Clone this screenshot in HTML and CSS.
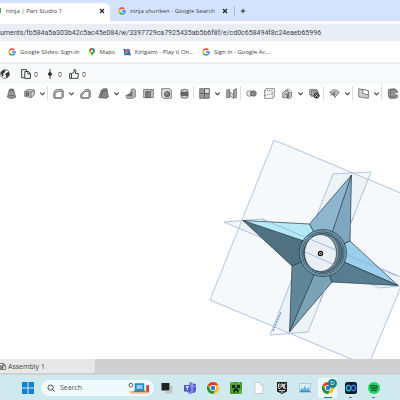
FILE: index.html
```html
<!DOCTYPE html>
<html lang="en">

<head>
  <meta charset="UTF-8">
  <meta name="viewport" content="width=device-width, initial-scale=1.0">
  <title>ninja | Part Studio 1</title>
  <link rel="stylesheet" href="styles.css">
</head>

<body>
  <!-- shared icons -->
  <svg class="defs" width="0" height="0">
    <symbol id="google" viewBox="0 0 16 16">
      <g fill="none" stroke-width="3">
        <path stroke="#ea4335" d="M3 5.200A6 6 0 0 1 12.500 4" />
        <path stroke="#fbbc05" d="M3 5.200A6 6 0 0 0 3 10.800" />
        <path stroke="#34a853" d="M3 10.800A6 6 0 0 0 11.800 12.600" />
        <path stroke="#4285f4" d="M11.800 12.600A6 6 0 0 0 14 8H8" />
      </g>
    </symbol>
    <symbol id="chrome" viewBox="0 0 24 24">
      <circle cx="12" cy="12" r="12" fill="#fbc116" />
      <path fill="#e33b2e" d="M12 12L1.600 6A12 12 0 0 1 22.400 6H12z" />
      <path fill="#229342" d="M1.600 6A12 12 0 0 0 12 24L17.200 15 12 12 6.800 15z" />
      <circle cx="12" cy="12" r="6" fill="#fff" />
      <circle cx="12" cy="12" r="4.500" fill="#2a75e8" />
    </symbol>
    <symbol id="chevron" viewBox="0 0 8 8">
      <path d="M1.500 3L4 5.500 6.500 3" fill="none" stroke="#333" stroke-width="1.300" />
    </symbol>
  </svg>

  <div class="screen">
    <div class="tabs">
      <div class="tab active">
        <i class="favicon"></i>
        <span class="title">ninja | Part Studio 1</span>
        <button class="close" aria-label="Close tab"><svg viewBox="0 0 8 8"><path d="M2 2l4 4M6 2L2 6" /></svg></button>
      </div>
      <div class="tab">
        <svg class="site"><use href="#google" /></svg>
        <span class="title">ninja shuriken - Google Search</span>
        <button class="close" aria-label="Close tab"><svg viewBox="0 0 8 8"><path d="M2 2l4 4M6 2L2 6" /></svg></button>
      </div>
      <button class="new-tab" aria-label="New tab"><svg viewBox="0 0 8 8"><path d="M4 1v6M1 4h6" /></svg></button>
    </div>

    <div class="address">
      <input type="text" aria-label="Address" value="uments/fb584a5a303b42c5ac45e084/w/3397729ca7925435ab5b6f8f/e/cd0c658494f8c24eaeb65996">
    </div>

    <nav class="bookmarks">
      <a href="#"><svg><use href="#google" /></svg>Google Slides: Sign-in</a>
      <a href="#"><svg viewBox="0 0 16 16">
          <path fill="#34a853" d="M8 16C7 11 2 10 2 6a6 6 0 0 1 12 0c0 4-5 5-6 10z" />
          <path fill="#4285f4" d="M8 0a6 6 0 0 1 5.500 3.500L8 9z" />
          <path fill="#ea4335" d="M3 2.500A6 6 0 0 1 8 0v6z" />
          <path fill="#fbbc05" d="M2.500 8L8 3l2 4-5 5z" />
          <circle cx="8" cy="6" r="2" fill="#fff" />
        </svg>Maps</a>
      <a href="#"><svg viewBox="0 0 16 16">
          <path fill="#2b6cb0" d="M1 1l6 2 6-1 1 6 2 7-8-1-5 1-1-6z" />
          <circle cx="8" cy="7" r="4" fill="#e2553d" />
          <path fill="#4db6e2" d="M5 5l6 5-7 1z" />
        </svg>Kirigami - Play it On...</a>
      <a href="#"><svg><use href="#google" /></svg>Sign in - Google Ac...</a>
    </nav>

    <div class="docbar">
      <svg class="globe" viewBox="0 0 16 16">
        <circle cx="8" cy="8" r="7" fill="#fff" stroke="#333" />
        <path fill="#333" d="M1 6l4-4 4 0-1 3-3 2 1 3-2 2zM9 7l5-3 1 5-4 5-2-1 1-3-2-1z" />
      </svg>
      <span class="count"><svg viewBox="0 0 16 16" class="line">
          <path d="M9 4V1H1v13h5M6 4h6l3 3v8H6z M11 4v4h4" />
        </svg>0</span>
      <span class="count"><svg viewBox="0 0 16 16" class="line">
          <path d="M8 0v16" /><circle cx="8" cy="8" r="2.500" fill="#333" />
        </svg>0</span>
      <span class="count"><svg viewBox="0 0 16 16" class="line">
          <path d="M1 7h3v8H1zM4 8l4-3V1h2l1 2-1 4h5l-1 8H6l-2-1" />
        </svg>0</span>
    </div>

    <div class="tools">
      <button aria-label="Loft"><svg viewBox="0 0 16 16"><path fill="#999" d="M5 2h6l3 11-3 2H5l-3-2z" /><ellipse cx="8" cy="3" rx="3" ry="1.500" /><path d="M2 13l3-2h6l3 2" /></svg></button>
      <button aria-label="Thicken"><svg viewBox="0 0 16 16"><path fill="#ccc" d="M1 5l5-3 9 1v7l-5 4-9-2z" /><path d="M1 5l9 1 5-3M10 6v8" /><path fill="#777" d="M3 7l4 0v4H3z" /></svg></button>
      <button class="more" aria-label="More solids"><svg><use href="#chevron" /></svg></button>
      <i class="sep"></i>
      <button aria-label="Fillet"><svg viewBox="0 0 16 16"><path fill="#bbb" d="M1 14V9q0-7 7-7h5l2 2v9l-2 2H2z" /><path fill="#fff" d="M3 14V10q0-5 5-5h5v9z" /></svg></button>
      <button class="more" aria-label="More fillets"><svg><use href="#chevron" /></svg></button>
      <button aria-label="Chamfer"><svg viewBox="0 0 16 16"><path fill="#bbb" d="M1 14V9l7-7h5l2 2v9l-2 2H2z" /><path fill="#fff" d="M3 14v-4l5-5h5v9z" /></svg></button>
      <button aria-label="Draft"><svg viewBox="0 0 16 16"><path fill="#888" d="M1 14L5 3l3-2h5l2 12-2 2z" /><path d="M4 14L7 4h6" /></svg></button>
      <button class="more" aria-label="More drafts"><svg><use href="#chevron" /></svg></button>
      <button aria-label="Rib"><svg viewBox="0 0 16 16"><path fill="#bbb" d="M1 11l8-3V2l4-1 2 2v10l-4 2H3z" /><path fill="#777" d="M4 11l6-6v7z" /></svg></button>
      <button aria-label="Shell"><svg viewBox="0 0 16 16"><path fill="#ccc" d="M1 2h14v12H1z" /><path fill="#888" d="M4 5h7v9H4z" /><path d="M6 5v9M11 5l3-2" /></svg></button>
      <button aria-label="Hole"><svg viewBox="0 0 16 16"><path fill="#ddd" d="M1 1h12l2 2v12H3l-2-2z" /><circle cx="9" cy="9" r="4" fill="#777" /><circle cx="8" cy="8" r="2" fill="#bbb" /></svg></button>
      <button aria-label="Thread"><svg viewBox="0 0 16 16"><path fill="#ccc" d="M3 3q5-3 10 0v11q-5 2-10 0z" /><path fill="#666" d="M3 6h10v5H3z" /></svg></button>
      <i class="sep"></i>
      <button aria-label="Pattern"><svg viewBox="0 0 16 16"><path fill="#999" d="M1 1h14v14H1z" /><path fill="#ddd" d="M8 1h7v7H8z" /><path d="M8 1v14M1 8h14" /></svg></button>
      <button class="more" aria-label="More patterns"><svg><use href="#chevron" /></svg></button>
      <button aria-label="Mirror"><svg viewBox="0 0 16 16"><path fill="#aaa" d="M1 3l4-1v12H1zM11 3l4-2v13h-4z" /><path fill="#ddd" d="M5 5l6 5v5L6 12z" /></svg></button>
      <i class="sep"></i>
      <button aria-label="Boolean"><svg viewBox="0 0 16 16"><circle cx="5" cy="8" r="4" fill="#eee" /><circle cx="11" cy="8" r="4" fill="#999" /><circle cx="9" cy="8" r="3" /></svg></button>
      <button aria-label="Split"><svg viewBox="0 0 16 16"><path d="M1 4l2-3h12v11l-2 3H1z" /><path stroke-dasharray="2 1" d="M1 4h11v10M1 11l12-3" /></svg></button>
      <button aria-label="Transform"><svg viewBox="0 0 16 16"><path fill="#ccc" d="M1 7l4-3h4v10H1zM9 7l5-1v7l-3 2H8z" /><path d="M5 4l4-3 4 4M10 9v4M3 9h4v4" /></svg></button>
      <button class="more" aria-label="More transforms"><svg><use href="#chevron" /></svg></button>
      <button aria-label="Delete part"><svg viewBox="0 0 16 16"><path fill="#ddd" d="M1 2h10v8H1z" /><path fill="#aaa" d="M3 4h10v8H3z" /><circle cx="11" cy="11" r="4" fill="#333" /><path stroke="#fff" d="M9 9l4 4M13 9l-4 4" /></svg></button>
      <i class="sep"></i>
      <button aria-label="Surface"><svg viewBox="0 0 16 16"><path fill="#ddd" d="M1 6Q8-1 15 6l-6 7z" /><path d="M3 8q5-5 10 0M5 10q3-3 6 0M2 11l6-5M8 6v8" /></svg></button>
      <button class="more" aria-label="More surfaces"><svg><use href="#chevron" /></svg></button>
      <i class="sep"></i>
      <button aria-label="Plane"><svg viewBox="0 0 16 16"><path fill="#ccc" d="M1 1l14 3v11L1 13z" /><path fill="#fff" d="M7 2l8 2v6l-8-2z" /></svg></button>
      <button class="more" aria-label="More planes"><svg><use href="#chevron" /></svg></button>
      <i class="sep"></i>
      <button aria-label="Frame"><svg viewBox="0 0 16 16"><path fill="#999" d="M2 2l9-1 4 3v3h-5v3h5v4l-4 1H4l-2-3z" /><path d="M5 3v10h7M5 3h8" /></svg></button>
    </div>

    <main class="canvas">
      <svg width="400" height="257" viewBox="0 102 400 257">
        <g class="plane">
          <path d="M274 140L434 207 368 366 210 300z" />
          <path d="M333 174L371 172 308 332 270 335z" />
          <path d="M224 222L262 219 418 284 380 288z" />
        </g>
        <g class="star">
          <path fill="#8fb6cf" d="M351.500 175L309.500 224l4 8 20 3z" />
          <path fill="#7fa7c0" d="M351.500 175L332 233l8 12 10-4z" />
          <path fill="#b5e9f5" d="M243 220.500L309.500 224l5 10-12 12z" />
          <path fill="#50717f" d="M243 220.500L304 241l-2 22-10 3z" />
          <path fill="#5f8799" d="M289.500 332L292 266l12-5 10 15z" />
          <path fill="#7ba3b6" d="M289.500 332L314 275l14-3 4 10z" />
          <path fill="#9bd0ec" d="M398 285.500L350 241l-6 3 0 18z" />
          <path fill="#587d91" d="M398 285.500L344 262l-15 12 3 8z" />
          <circle cx="323" cy="253" r="23.500" fill="#6f98ab" />
          <circle cx="323" cy="253" r="21" fill="#86adbf" />
          <circle cx="323" cy="253" r="19.500" fill="#526f80" />
          <path class="plain" fill="#8497a5" d="M323 234q16 3 15 19t-15 19q8-18 0-38" />
          <ellipse cx="320.500" cy="253" rx="16" ry="18.500" fill="#e9eff5" />
          <path class="plain" fill="none" d="M330 269q10-14 1-31" />
        </g>
        <path class="edge" d="M262 219L336 250M305 252L335 265M345 238L353 218M327 283L320 302M345 254L397 276" />
        <circle cx="320.500" cy="253.500" r="2" fill="#fff" stroke="#111" stroke-width="1.300" />
        <circle cx="320.500" cy="253.500" r="0.700" />
        <path d="M273 331L281 312" stroke="#6b8fd0" stroke-width="1.300" stroke-dasharray="2 1" />
      </svg>
    </main>

    <div class="sheets">
      <button class="sheet"><svg viewBox="0 0 10 12"><path d="M-3 1h8l4 3v7h-12z" fill="#eee" /><path d="M5 1v3h4M0 5h5v4H0" fill="#999" /></svg>Assembly 1</button>
    </div>

    <div class="taskbar">
      <button aria-label="Start"><svg viewBox="0 0 24 24" fill="#0f83d0"><path d="M0 0h11v11H0zM13 0h11v11H13zM0 13h11v11H0zM13 13h11v11H13z" /></svg></button>
      <label class="search">
        <svg class="glass" viewBox="0 0 10 10"><circle cx="4.500" cy="4.500" r="3.300" /><path d="M7 7l2.500 2.500" /></svg>
        <input type="text" placeholder="Search" aria-label="Search">
        <svg class="art" viewBox="0 0 24 12">
          <path fill="#efb98b" d="M1 10q11-4 22 0l-2 2H3z" />
          <circle cx="3" cy="3" r="2" fill="#fff" stroke="#555" />
          <path fill="#248bc5" d="M7 1h10v8H7z" /><path fill="#91d4ec" d="M9 3h6v4H9z" />
          <path fill="#5d6580" d="M6 9h12v1H6z" /><path fill="#c8463c" d="M19 3h3v7h-3z" />
        </svg>
      </label>
      <button aria-label="Task view"><svg viewBox="0 0 24 24"><path fill="#eee" d="M8 8h15v15H8z" /><path fill="#222" d="M1 2h16v15H1z" /><path fill="#999" d="M8 17h9V8h6v15H8z" opacity=".5" /></svg></button>
      <button aria-label="Teams"><svg viewBox="0 0 24 24"><circle cx="14" cy="4" r="4" fill="#7b83eb" /><circle cx="21" cy="6" r="3" fill="#5059c9" /><path fill="#5059c9" d="M14 9h10v7q-1 6-6 6z" /><path fill="#7b83eb" d="M7 9h12v8q-1 7-7 7-5-1-5-7z" /><path fill="#4b53bc" d="M0 6h13v13H0z" /><path stroke="#fff" stroke-width="2" d="M3 9.500h7M6.500 9.500V16" /></svg></button>
      <button aria-label="Chrome"><svg><use href="#chrome" /></svg></button>
      <button aria-label="Minecraft"><svg viewBox="0 0 24 24"><path fill="#4a9c2e" d="M0 0h24v24H0z" /><path fill="#69b747" d="M0 0h6v5H0zM15 0h5v4h-5zM18 17h6v7h-6z" /><path fill="#132b0d" d="M4 6h6v6H4zM14 6h6v6h-6zM10 11h4v3h3v7h-3v-3h-4v3H7v-7h3z" /></svg></button>
      <button aria-label="Document"><svg viewBox="0 0 24 24"><path fill="#fafafa" stroke="#aaa" d="M4 1h11l5 5v17H4z" /><path fill="#ddd" stroke="#aaa" d="M15 1v5h5" /></svg></button>
      <button aria-label="Epic Games"><svg viewBox="0 0 24 24"><path fill="#222" d="M2 0h20v19l-10 5-10-5z" /><path fill="none" stroke="#fff" stroke-width="1.500" d="M8 4H5v9h3M5 8h3M10 13V4h3v5h-3M15 4v9M20 4h-3v9h3M6 17h12M9 20h6" /></svg></button>
      <button aria-label="Monitor"><svg viewBox="0 0 24 24"><path fill="#d9edf8" stroke="#8aa9bd" d="M1 3h22v18H1z" /><path fill="#5daee0" d="M2 18l4-7 3 4 2-8 4 8 4-5 3 8z" /><path fill="#3b86bd" d="M2 18h20v2H2z" /></svg></button>
      <button class="current" aria-label="Chrome profile"><svg><use href="#chrome" /></svg><span class="badge">D</span></button>
      <button class="open" aria-label="Infinity"><svg viewBox="0 0 24 24"><rect width="24" height="24" rx="5" fill="#101d2b" /><path fill="none" stroke="#28b5e8" stroke-width="3" d="M12 12C8 4 3 6 3 12s6 9 9 0" /><path fill="none" stroke="#397be8" stroke-width="3" d="M12 12c3-9 9-6 9 0s-5 8-9 0" /></svg></button>
      <button class="open" aria-label="Spotify"><svg viewBox="0 0 24 24"><circle cx="12" cy="12" r="12" fill="#1ed760" /><path fill="none" stroke="#123a20" stroke-width="2.500" stroke-linecap="round" d="M5 8q8-2 14 1.500M6 12.500q6-2 11.500 1M7 16.500q5-1 9 1" /></svg></button>
    </div>
  </div>
</body>

</html>
```

FILE: styles.css
```css
* {
  margin: 0;
  padding: 0;
  box-sizing: border-box;
}

body {
  font-family: "Open Sans", "Noto Sans", sans-serif;
  font-size: 7px;
  color: #444;
  background-color: #fff;
}

button,
input {
  font: inherit;
  color: inherit;
  border: 0;
  outline: 0;
  background: none;
}

a {
  color: inherit;
  text-decoration: none;
}

svg {
  display: block;
  flex: none;
}

.defs {
  position: absolute;
}

.screen {
  display: flex;
  flex-direction: column;
  min-height: 100vh;
  overflow: hidden;
}

/* browser */
.tabs {
  display: flex;
  align-items: center;
  height: 21px;
  font-size: 6px;
  background-color: #d3e3fd;
}

.tab {
  display: flex;
  align-items: center;
  width: 125px;
  height: 10px;
  padding: 0 5px 0 8px;
  border-right: 1px solid #a9bad5;
}

.tab.active {
  width: 110px;
  height: 18px;
  padding: 0 4px 3px 0;
  align-self: flex-end;
  border: 0;
  border-radius: 0 6px 0 0;
  background-color: #fff;
}

.favicon {
  width: 1px;
  height: 5px;
  margin-right: 5px;
  background-color: #4caf50;
}

.site {
  width: 8px;
  height: 8px;
  margin-right: 4px;
}

.title {
  flex: 1;
  white-space: nowrap;
}

.close,
.new-tab {
  width: 8px;
  height: 8px;
}

.close path,
.new-tab path {
  stroke: #222;
  stroke-width: 1.2;
}

.new-tab {
  margin-left: 4px;
}

.new-tab svg {
  padding: 1px;
}

.address {
  padding: 3px 0 1px;
}

.address input {
  display: block;
  width: 100%;
  height: 17px;
  font-family: Roboto, sans-serif;
  background-color: #e9edf6;
}

.bookmarks {
  display: flex;
  gap: 8px;
  height: 20px;
  padding-left: 8px;
  font-size: 6px;
  white-space: nowrap;
}

.bookmarks a {
  display: flex;
  align-items: center;
  gap: 4px;
}

.bookmarks svg {
  width: 8px;
  height: 8px;
}

/* document header and feature tools */
.docbar {
  display: flex;
  align-items: center;
  gap: 7px;
  height: 22px;
  border-top: 2px solid #ebedee;
  background-color: #f7f9fb;
}

.docbar svg {
  width: 10px;
  height: 10px;
}

.docbar .globe {
  margin-right: 4px;
}

.count {
  display: flex;
  align-items: center;
  gap: 3px;
}

.line {
  fill: none;
  stroke: #333;
  stroke-width: 1.5;
}

.tools {
  display: flex;
  align-items: center;
  height: 18px;
  padding-left: 2px;
}

.tools button {
  flex: none;
  width: 18px;
  padding: 0 4px;
}

.tools svg {
  width: 11px;
  height: 11px;
  fill: none;
  stroke: #555;
}

.tools .more {
  width: 9px;
  padding: 0 1px;
}

.tools .more svg {
  width: 7px;
  height: 7px;
}

.sep {
  flex: none;
  width: 1px;
  height: 14px;
  margin-right: 1px;
  background-color: #ddd;
}

/* model */
.canvas {
  flex: 1;
}

.plane {
  fill: #a0c4dc;
  fill-opacity: .11;
  stroke: #9eb5dc;
  stroke-width: .8;
}

.star {
  stroke: #263943;
  stroke-width: .7;
  stroke-linejoin: round;
}

.plain {
  stroke: none;
}

.edge {
  fill: none;
  stroke: #88a9d6;
  stroke-width: .7;
}

.sheets {
  height: 16px;
  background-color: #cfcfcf;
}

.sheet {
  display: flex;
  align-items: center;
  gap: 2px;
  width: 95px;
  height: 14px;
  border-radius: 0 0 3px 0;
  background-color: #e7e7e7;
}

.sheet svg {
  width: 6px;
  height: 9px;
  stroke: #333;
}

/* taskbar */
.taskbar {
  display: flex;
  align-items: center;
  height: 25px;
  padding-left: 18px;
  background-color: #d0e9ee;
}

.taskbar button {
  position: relative;
  display: flex;
  align-items: center;
  justify-content: center;
  flex: none;
  width: 19px;
  height: 20px;
  margin-right: 4px;
}

.taskbar button svg {
  width: 12px;
  height: 12px;
}

.search {
  display: flex;
  align-items: center;
  gap: 5px;
  width: 113px;
  height: 16px;
  margin-right: 3px;
  padding: 0 3px 0 6px;
  border-radius: 8px;
  background-color: #f0f9fb;
}

.search input {
  flex: 1;
  min-width: 0;
}

.search input::placeholder {
  color: #555;
}

.glass {
  width: 8px;
  height: 8px;
  fill: none;
  stroke: #222;
}

.art {
  width: 23px;
  height: 12px;
}

.taskbar .current {
  border-radius: 2px;
  background-color: #eff9fa;
}

.current::after,
.open::after {
  content: "";
  position: absolute;
  bottom: 0;
  width: 3px;
  height: 1px;
  background-color: #68777c;
}

.current::after {
  width: 8px;
  background-color: #16798b;
}

.badge {
  position: absolute;
  top: 1px;
  right: 0;
  width: 9px;
  height: 9px;
  border-radius: 50%;
  background-color: #14828e;
  color: #fff;
  font-size: 6px;
  line-height: 9px;
}
```
